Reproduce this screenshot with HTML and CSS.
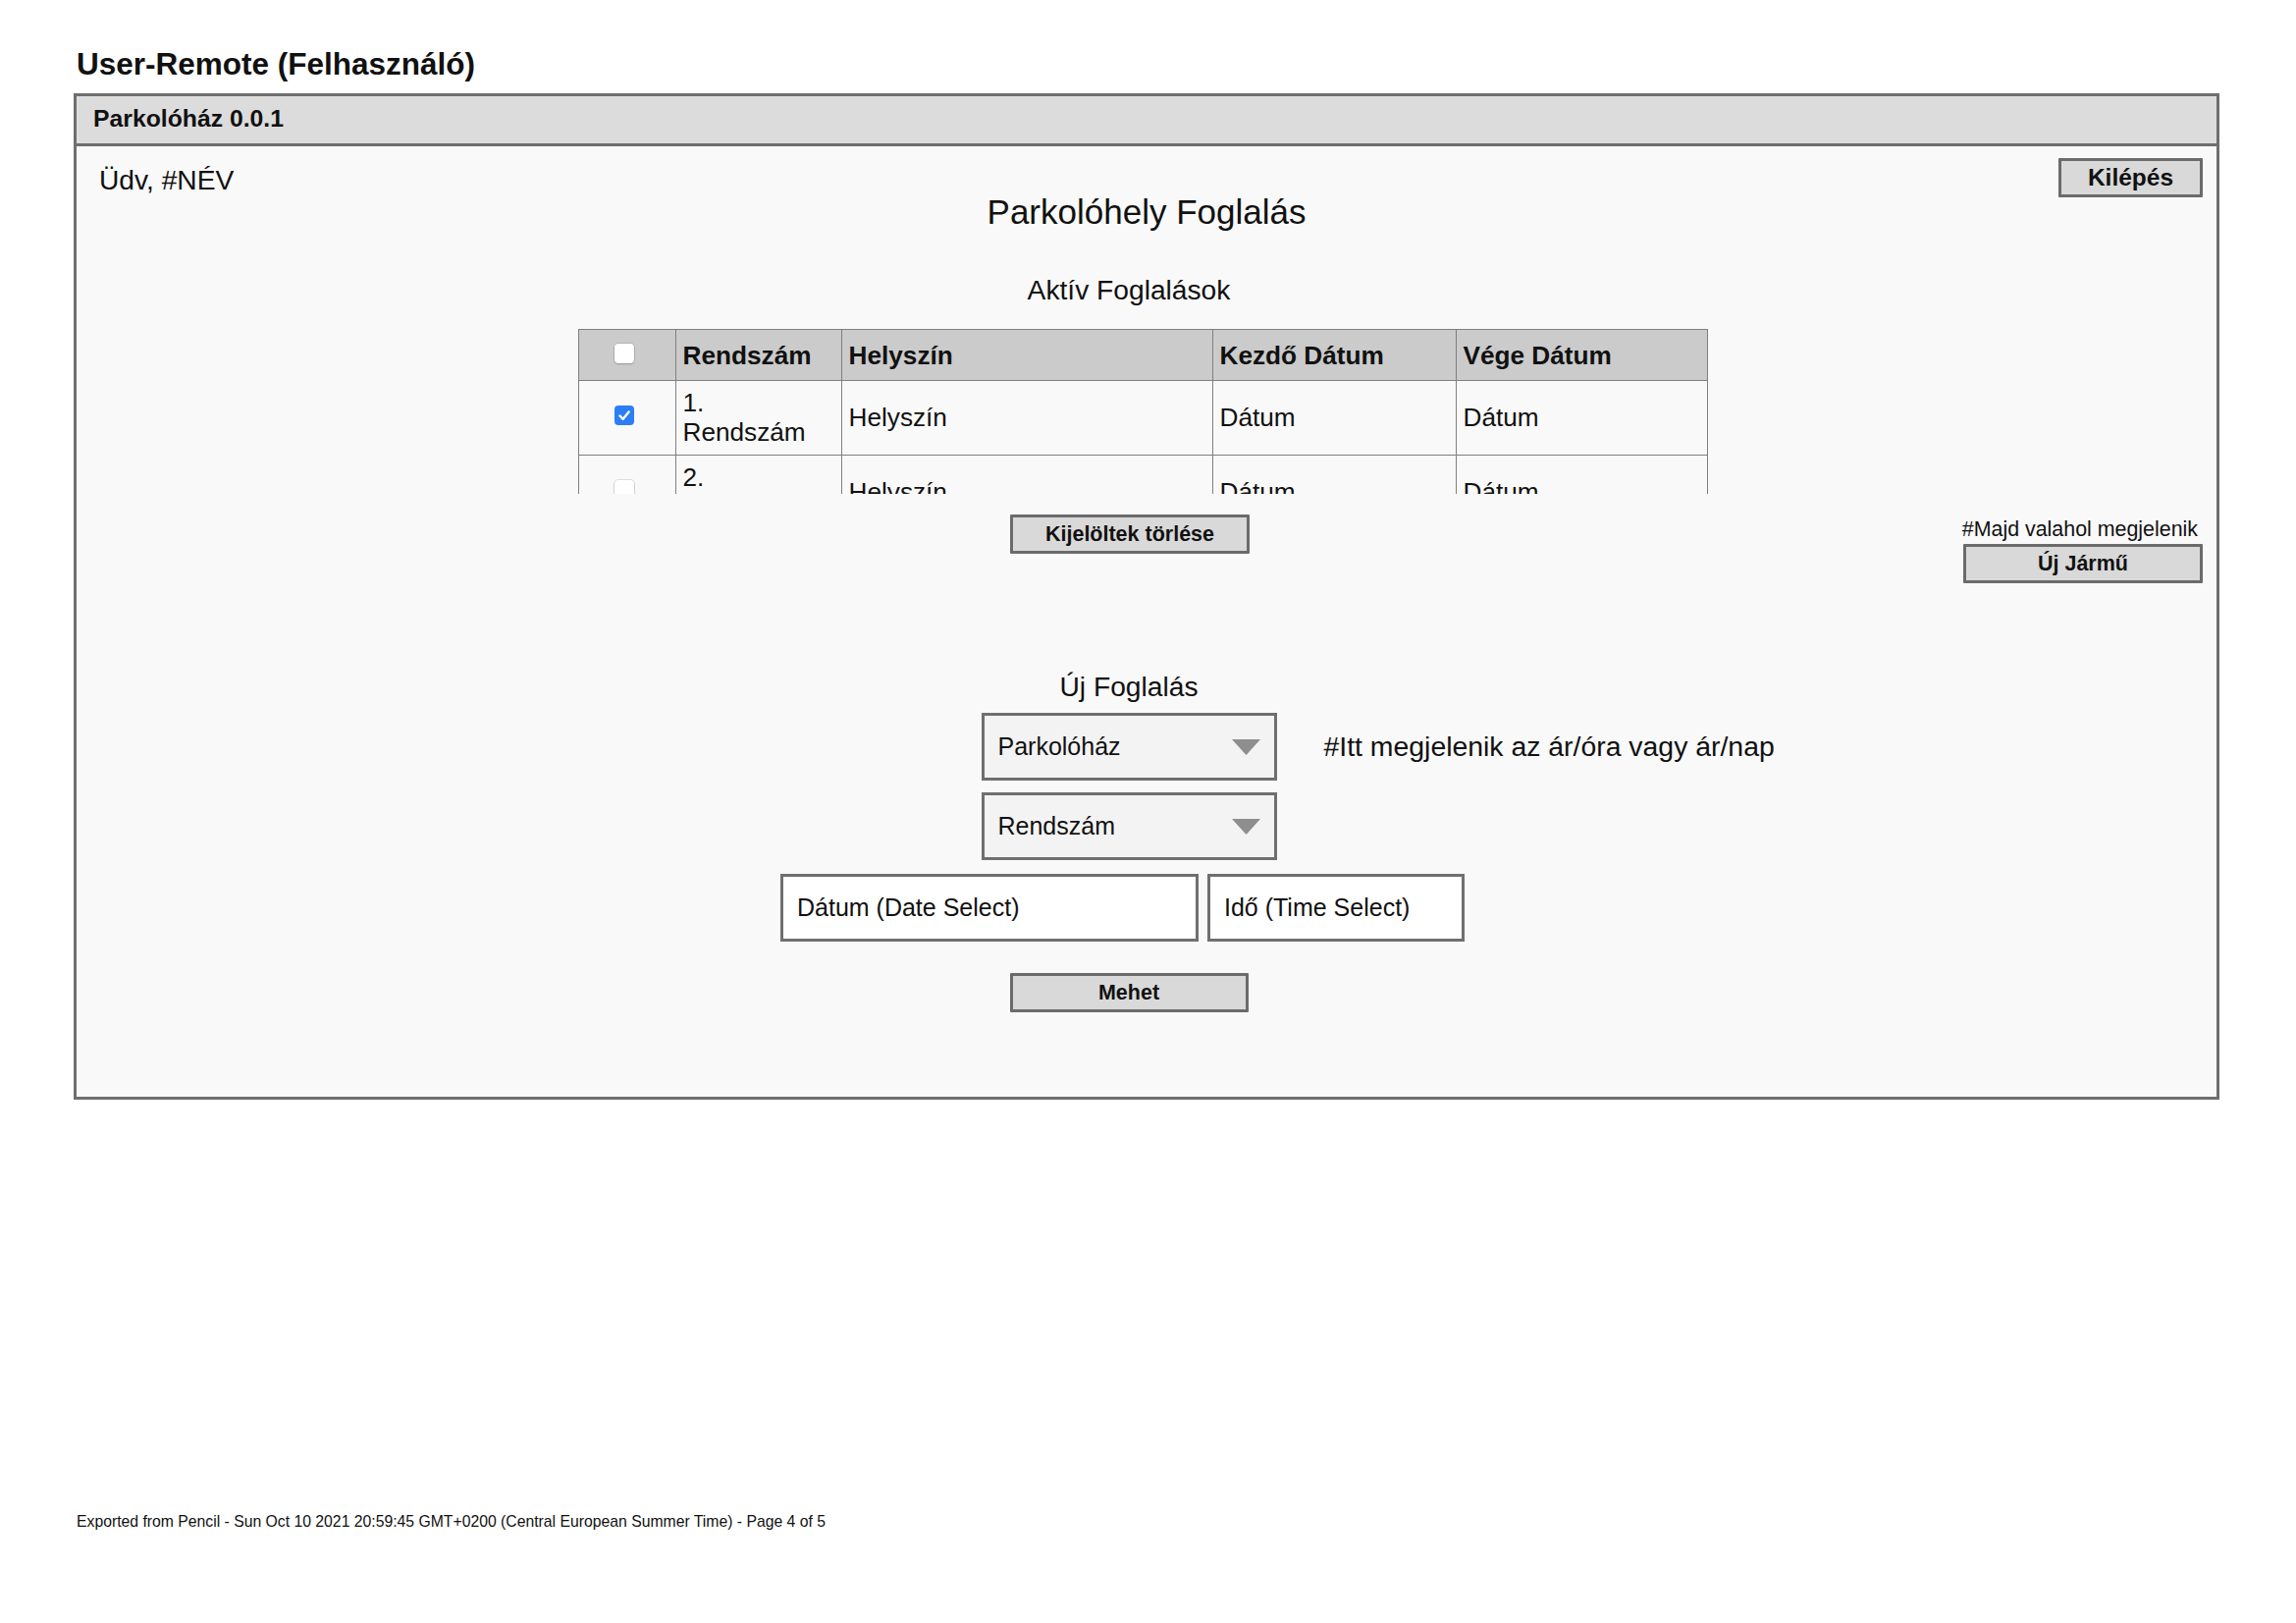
FILE: index.html
```html
<!DOCTYPE html>
<html lang="hu">
<head>
<meta charset="utf-8">
<title>User-Remote (Felhasználó)</title>
<link rel="stylesheet" href="styles.css">
</head>
<body>
<div class="page">
  <h1 class="page-title">User-Remote (Felhasználó)</h1>
  <div class="window">
    <div class="window-bar">Parkolóház 0.0.1</div>
    <div class="window-body">
      <div class="topbar">
        <div class="greeting">Üdv, #NÉV</div>
        <h2 class="heading">Parkolóhely Foglalás</h2>
        <button class="btn btn-logout">Kilépés</button>
      </div>

      <section class="section">
        <h3 class="section-title">Aktív Foglalások</h3>
        <div class="table-wrap">
          <table class="grid">
            <colgroup>
              <col class="c-check"><col class="c-plate"><col class="c-place"><col class="c-start"><col class="c-end">
            </colgroup>
            <thead>
              <tr>
                <th class="check"><span class="cb"></span></th>
                <th>Rendszám</th>
                <th>Helyszín</th>
                <th>Kezdő Dátum</th>
                <th>Vége Dátum</th>
              </tr>
            </thead>
            <tbody>
              <tr>
                <td class="check"><span class="cb cb-checked"><svg viewBox="0 0 20 20" width="20" height="20"><path d="M5.5 10.5 L8.7 13.8 L14.6 6.4" fill="none" stroke="#fff" stroke-width="2.4" stroke-linecap="round" stroke-linejoin="round"/></svg></span></td>
                <td>1. Rendszám</td>
                <td>Helyszín</td>
                <td>Dátum</td>
                <td>Dátum</td>
              </tr>
              <tr>
                <td class="check"><span class="cb"></span></td>
                <td>2. Rendszám</td>
                <td>Helyszín</td>
                <td>Dátum</td>
                <td>Dátum</td>
              </tr>
            </tbody>
          </table>
        </div>
      </section>

      <div class="actions">
        <button class="btn btn-delete">Kijelöltek törlése</button>
        <div class="vehicle">
          <div class="vehicle-note">#Majd valahol megjelenik</div>
          <button class="btn btn-vehicle">Új Jármű</button>
        </div>
      </div>

      <section class="section section-new">
        <h3 class="section-title section-title-new">Új Foglalás</h3>
        <div class="select-row">
          <div class="select">
            <span>Parkolóház</span>
            <svg class="caret" viewBox="0 0 29 16" width="29" height="16"><polygon points="0,0 29,0 14.5,16" fill="#8e8e8e"/></svg>
          </div>
          <div class="price-note">#Itt megjelenik az ár/óra vagy ár/nap</div>
        </div>
        <div class="select select-plate">
          <span>Rendszám</span>
          <svg class="caret" viewBox="0 0 29 16" width="29" height="16"><polygon points="0,0 29,0 14.5,16" fill="#8e8e8e"/></svg>
        </div>
        <div class="dt-row">
          <div class="field field-date">Dátum (Date Select)</div>
          <div class="field field-time">Idő (Time Select)</div>
        </div>
        <button class="btn btn-go">Mehet</button>
      </section>
    </div>
  </div>
  <footer class="footer">Exported from Pencil - Sun Oct 10 2021 20:59:45 GMT+0200 (Central European Summer Time) - Page 4 of 5</footer>
</div>
</body>
</html>
```

FILE: styles.css
```css
* { box-sizing: border-box; }

html, body {
  margin: 0;
  background: #ffffff;
}

body {
  font-family: "Liberation Sans", Arial, Helvetica, sans-serif;
  color: #111111;
}

.page {
  padding: 47px 0 0 75px;
}

.page-title {
  margin: 0;
  padding-left: 3px;
  font-size: 31.5px;
  line-height: 36px;
  font-weight: bold;
}

.window {
  margin-top: 12px;
  width: 2186px;
  border: 3px solid #6e6e6e;
  background: #f9f9f9;
}

.window-bar {
  height: 51px;
  background: #dcdcdc;
  border-bottom: 3px solid #6e6e6e;
  padding-left: 17px;
  font-size: 24.75px;
  line-height: 46px;
  font-weight: bold;
}

.window-body {
  padding: 0 14px 86px;
}

/* top row */
.topbar {
  display: grid;
  grid-template-columns: 1fr auto 1fr;
  align-items: start;
}

.greeting {
  margin: 18px 0 0 9px;
  font-size: 28.2px;
  line-height: 32px;
}

.heading {
  margin: 47px 0 0;
  font-size: 35px;
  line-height: 39px;
  font-weight: normal;
}

/* buttons */
.btn {
  height: 40px;
  padding: 0;
  border: 3px solid #6b6b6b;
  border-radius: 1px;
  background: #d9d9d9;
  color: #111111;
  font-family: inherit;
  font-size: 21.5px;
  font-weight: bold;
}

.btn-logout {
  justify-self: end;
  margin-top: 12px;
  width: 147px;
  font-size: 24.5px;
}

/* sections */
.section {
  display: flex;
  flex-direction: column;
  align-items: center;
  margin-right: 36px;
}

.section-title {
  margin: 44px 0 0;
  font-size: 28.2px;
  line-height: 32px;
  font-weight: normal;
}

.section-title-new {
  margin-top: 89px;
}

/* table */
.table-wrap {
  margin: 24px 0 0 29px;
  width: 1152px;
  height: 168px;
  overflow: hidden;
}

.grid {
  width: 1150px;
  border-collapse: collapse;
  table-layout: fixed;
  font-size: 26.2px;
  line-height: 30px;
}

.c-check { width: 99px; }
.c-plate { width: 169px; }
.c-place { width: 378px; }
.c-start { width: 248px; }
.c-end { width: 256px; }

.grid th,
.grid td {
  border: 1px solid #7f7f7f;
  padding: 7px 12px 8px 7px;
  text-align: left;
  vertical-align: middle;
}

.grid th {
  background: #cbcbcb;
  font-weight: bold;
  padding-top: 11px;
  padding-bottom: 10px;
}

.grid td {
  font-weight: normal;
}

.grid .check {
  text-align: center;
  padding-left: 0;
  padding-right: 5px;
}

.cb {
  display: block;
  margin: 0 auto;
  width: 20px;
  height: 20px;
  border-radius: 4px;
  background: #ffffff;
  box-shadow: 0 0 0 1px rgba(0, 0, 0, 0.10), 0 1px 2px rgba(0, 0, 0, 0.18);
  transform: translateY(-2px);
}

.cb svg {
  display: block;
}

.cb-checked {
  background: #2b7ef6;
  box-shadow: none;
}

/* actions row */
.actions {
  display: grid;
  grid-template-columns: 1fr auto 1fr;
  align-items: start;
  margin-top: 21px;
}

.btn-delete {
  grid-column: 2;
  width: 244px;
  margin-right: 34px;
}

.vehicle {
  grid-column: 3;
  justify-self: end;
  display: flex;
  flex-direction: column;
  align-items: flex-end;
}

.vehicle-note {
  padding-right: 5px;
  font-size: 21.4px;
  line-height: 30px;
  white-space: nowrap;
}

.btn-vehicle {
  width: 244px;
}

/* new booking */
.select-row {
  width: 100%;
  display: grid;
  grid-template-columns: 1fr auto 1fr;
  margin-top: 11px;
}

.select {
  grid-column: 2;
  width: 301px;
  height: 69px;
  border: 3px solid #6f6f6f;
  background: #f3f3f3;
  padding: 0 14px;
  display: flex;
  align-items: center;
  justify-content: space-between;
  font-size: 25px;
}

.caret {
  display: block;
  flex: none;
}

.select-plate {
  margin-top: 12px;
}

.price-note {
  grid-column: 3;
  align-self: center;
  margin-left: 48px;
  margin-bottom: 2px;
  font-size: 28.4px;
  line-height: 32px;
  white-space: nowrap;
}

.dt-row {
  display: flex;
  gap: 9px;
  margin-top: 14px;
  margin-right: 13px;
}

.field {
  height: 69px;
  border: 3px solid #6f6f6f;
  background: #ffffff;
  padding: 0 14px;
  display: flex;
  align-items: center;
  font-size: 25px;
}

.field-date { width: 426px; }
.field-time { width: 262px; }

.btn-go {
  margin-top: 32px;
  width: 243px;
}

.footer {
  margin-top: 421px;
  padding-left: 3px;
  font-size: 15.75px;
  line-height: 18px;
}
```
